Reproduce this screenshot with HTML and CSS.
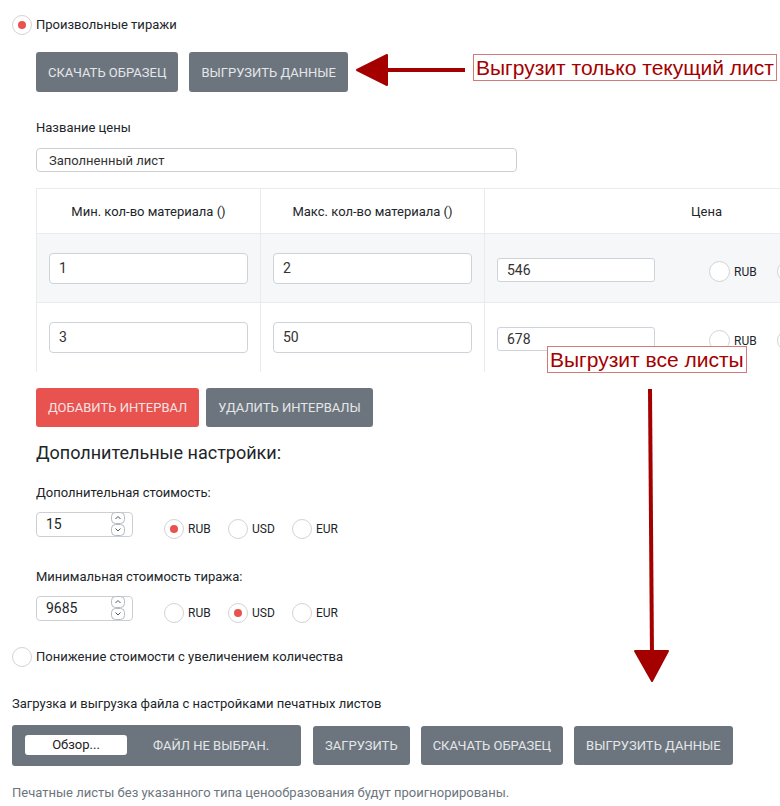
FILE: index.html
```html
<!DOCTYPE html>
<html lang="ru">
<head>
    <meta charset="UTF-8">
    <title>Печатные листы</title>
    <link rel="stylesheet" href="styles.css">
</head>
<body>
<div class="page">
    <label class="radio top-radio"><span class="dot checked"></span>Произвольные тиражи</label>

    <div class="inner">
        <div class="btn-row first">
            <button class="btn">Скачать образец</button>
            <button class="btn">Выгрузить данные</button>
        </div>

        <div class="field-label name-label">Название цены</div>
        <input class="text-input name-input" type="text" value="Заполненный лист">

        <table class="intervals">
            <tr>
                <th class="col">Мин. кол-во материала ()</th>
                <th class="col">Макс. кол-во материала ()</th>
                <th class="price-col">Цена</th>
            </tr>
            <tr class="odd">
                <td><input class="cell-input" type="text" value="1"></td>
                <td><input class="cell-input" type="text" value="2"></td>
                <td>
                    <div class="price">
                        <input class="price-input" type="text" value="546">
                        <label class="radio cur"><span class="dot"></span>RUB</label>
                        <label class="radio cur"><span class="dot"></span>USD</label>
                    </div>
                </td>
            </tr>
            <tr>
                <td><input class="cell-input" type="text" value="3"></td>
                <td><input class="cell-input" type="text" value="50"></td>
                <td>
                    <div class="price">
                        <input class="price-input" type="text" value="678">
                        <label class="radio cur"><span class="dot"></span>RUB</label>
                        <label class="radio cur"><span class="dot"></span>USD</label>
                    </div>
                </td>
            </tr>
        </table>

        <div class="btn-row second">
            <button class="btn btn-red">Добавить интервал</button>
            <button class="btn">Удалить интервалы</button>
        </div>

        <h3 class="section-title">Дополнительные настройки:</h3>

        <div class="field-label add-label">Дополнительная стоимость:</div>
        <div class="control-row">
            <div class="num-input">
                <span>15</span>
                <svg class="spin" width="14" height="24" viewBox="0 0 14 24">
                    <rect x="0.5" y="0.5" width="13" height="11" rx="4" fill="#fff" stroke="#b5bac0"/>
                    <rect x="0.5" y="12.5" width="13" height="11" rx="4" fill="#fff" stroke="#b5bac0"/>
                    <polyline points="4.5,7 7,4.5 9.5,7" fill="none" stroke="#555" stroke-width="1"/>
                    <polyline points="4.5,16.5 7,19 9.5,16.5" fill="none" stroke="#555" stroke-width="1"/>
                </svg>
            </div>
            <div class="currencies">
                <label class="radio"><span class="dot checked"></span>RUB</label>
                <label class="radio"><span class="dot"></span>USD</label>
                <label class="radio"><span class="dot"></span>EUR</label>
            </div>
        </div>

        <div class="field-label min-label">Минимальная стоимость тиража:</div>
        <div class="control-row">
            <div class="num-input">
                <span>9685</span>
                <svg class="spin" width="14" height="24" viewBox="0 0 14 24">
                    <rect x="0.5" y="0.5" width="13" height="11" rx="4" fill="#fff" stroke="#b5bac0"/>
                    <rect x="0.5" y="12.5" width="13" height="11" rx="4" fill="#fff" stroke="#b5bac0"/>
                    <polyline points="4.5,7 7,4.5 9.5,7" fill="none" stroke="#555" stroke-width="1"/>
                    <polyline points="4.5,16.5 7,19 9.5,16.5" fill="none" stroke="#555" stroke-width="1"/>
                </svg>
            </div>
            <div class="currencies">
                <label class="radio"><span class="dot"></span>RUB</label>
                <label class="radio"><span class="dot checked"></span>USD</label>
                <label class="radio"><span class="dot"></span>EUR</label>
            </div>
        </div>
    </div>

    <label class="radio discount"><span class="dot"></span>Понижение стоимости с увеличением количества</label>

    <div class="field-label file-label">Загрузка и выгрузка файла с настройками печатных листов</div>
    <div class="file-row">
        <div class="file-box">
            <span class="browse">Обзор...</span>
            <span class="file-name">Файл не выбран.</span>
        </div>
        <button class="btn">Загрузить</button>
        <button class="btn">Скачать образец</button>
        <button class="btn">Выгрузить данные</button>
    </div>

    <p class="hint">Печатные листы без указанного типа ценообразования будут проигнорированы.</p>

    <!-- annotations over the screenshot -->
    <svg class="arrow arrow-left" width="120" height="40" viewBox="0 0 120 40">
        <line x1="28" y1="18" x2="110" y2="18" stroke="#a50000" stroke-width="4"/>
        <polygon points="2,18 32,3 32,33" fill="#a50000" stroke="#a50000" stroke-width="2" stroke-linejoin="round"/>
    </svg>
    <div class="note note-one">Выгрузит только текущий лист</div>

    <div class="note note-all">Выгрузит все листы</div>
    <svg class="arrow arrow-down" width="44" height="300" viewBox="0 0 44 300">
        <line x1="20" y1="0" x2="22" y2="268" stroke="#a50000" stroke-width="4"/>
        <polygon points="5,262 38,262 22,292" fill="#a50000" stroke="#a50000" stroke-width="2" stroke-linejoin="round"/>
    </svg>
</div>
</body>
</html>
```

FILE: styles.css
```css
body {
    margin: 0;
    font-family: Roboto, "Noto Sans", sans-serif;
    font-size: 13px;
    color: #212529;
    background: #fff;
    overflow: hidden;
}

.page {
    position: relative;
    width: 780px;
    height: 806px;
    overflow: hidden;
    padding-left: 12px;
    box-sizing: border-box;
}

.inner {
    padding-left: 24px;
}

/* radios */
.radio {
    display: flex;
    align-items: center;
    line-height: 20px;
}

.dot {
    width: 20px;
    height: 20px;
    border: 1px solid #d3d3d3;
    border-radius: 50%;
    box-sizing: border-box;
    margin-right: 4px;
    display: flex;
    align-items: center;
    justify-content: center;
    background: #fff;
}

.dot.checked::after {
    content: "";
    width: 8px;
    height: 8px;
    border-radius: 50%;
    background: #e8524f;
}

.top-radio {
    padding-top: 15px;
}

/* buttons */
.btn-row {
    display: flex;
}

.btn {
    height: 40px;
    padding: 0 12px;
    border: none;
    border-radius: 3px;
    background: #6c757d;
    color: #e4e7ea;
    font-family: Roboto, sans-serif;
    font-size: 13px;
    text-transform: uppercase;
    cursor: pointer;
}

.btn-red {
    background: #e8524f;
    color: #f4e4e4;
}

.btn-row.first {
    margin-top: 17px;
    gap: 11px;
}

.btn-row.second {
    margin-top: 16px;
    gap: 7px;
}

.btn-row.second .btn {
    height: 39px;
    padding: 0 12px;
}

.field-label {
    line-height: 16px;
}

.name-label {
    margin-top: 28px;
}

.text-input {
    display: block;
    margin-top: 12px;
    width: 481px;
    height: 24px;
    box-sizing: border-box;
    border: 1px solid #ccd0d5;
    border-radius: 4px;
    padding: 0 12px;
    font-family: Roboto, sans-serif;
    font-size: 13px;
    color: #333;
}

/* intervals table */
.intervals {
    margin-top: 16px;
    border-collapse: collapse;
    table-layout: fixed;
    width: 892px;
}

.intervals th {
    height: 45px;
    padding: 0;
    box-sizing: border-box;
    font-weight: normal;
    text-align: center;
    border-top: 1px solid #e9ecef;
    border-left: 1px solid #e9ecef;
}

.intervals th.col {
    width: 224px;
}

.intervals td {
    height: 69px;
    padding: 0 12px;
    border-left: 1px solid #e9ecef;
    border-top: 1px solid #e9ecef;
    box-sizing: border-box;
}

.intervals tr.odd td {
    background: #f6f7f9;
}

.cell-input {
    display: block;
    width: 199px;
    height: 31px;
    box-sizing: border-box;
    border: 1px solid #cfd3d9;
    border-radius: 4px;
    padding: 0 9px;
    font-family: Roboto, sans-serif;
    font-size: 14px;
    color: #333;
}

.price {
    display: flex;
    align-items: center;
    margin-top: 3px;
}

.price-input {
    width: 158px;
    height: 24px;
    box-sizing: border-box;
    border: 1px solid #cfd3d9;
    border-radius: 3px;
    padding: 0 9px;
    font-family: Roboto, sans-serif;
    font-size: 14px;
    color: #333;
}

.price .cur {
    margin-top: 4px;
    margin-left: 54px;
    width: 60px;
    font-size: 12px;
}

.price .cur .dot {
    width: 21px;
    height: 21px;
}

.price .cur + .cur {
    margin-left: 8px;
}

/* additional settings */
.section-title {
    margin: 14px 0 0;
    font-size: 18px;
    font-weight: normal;
    line-height: 24px;
}

.add-label {
    margin-top: 20px;
}

.min-label {
    margin-top: 32px;
}

.control-row {
    display: flex;
    margin-top: 11px;
    height: 25px;
}

.num-input {
    width: 97px;
    height: 25px;
    box-sizing: border-box;
    border: 1px solid #ccd0d5;
    border-radius: 4px;
    padding: 0 0 0 9px;
    display: flex;
    align-items: center;
    justify-content: space-between;
    font-size: 14px;
}

.spin {
    margin-right: 7px;
}

.currencies {
    display: flex;
    margin-left: 31px;
    margin-top: 10px;
    font-size: 12px;
}

.currencies .radio {
    width: 64px;
}

.discount {
    margin-top: 26px;
}

.file-label {
    margin-top: 29px;
}

.file-row {
    display: flex;
    align-items: flex-start;
    margin-top: 13px;
    gap: 11px;
}

.file-row .btn {
    height: 39px;
    margin-top: 1px;
}

.file-box {
    width: 289px;
    height: 41px;
    border-radius: 3px;
    background: #6c757d;
    display: flex;
    align-items: center;
    padding-left: 13px;
    box-sizing: border-box;
    margin-right: 1px;
}

.browse {
    width: 102px;
    height: 20px;
    background: #fff;
    border-radius: 3px;
    text-align: center;
    line-height: 20px;
    color: #222;
}

.file-name {
    margin-left: 26px;
    color: #e4e7ea;
    text-transform: uppercase;
}

.hint {
    margin: 19px 0 0;
    line-height: 16px;
    color: #6c757d;
}

/* annotations */
.arrow {
    position: absolute;
}

.arrow-left {
    left: 355px;
    top: 52px;
}

.arrow-down {
    left: 630px;
    top: 389px;
}

.note {
    position: absolute;
    background: #fff;
    border: 1px solid #d27a7a;
    color: #a50000;
    font-family: "Liberation Sans", Arial, sans-serif;
    font-size: 21px;
    line-height: 25px;
    padding: 0 2px;
}

.note-one {
    left: 473px;
    top: 54px;
}

.note-all {
    left: 547px;
    top: 346px;
}
```
